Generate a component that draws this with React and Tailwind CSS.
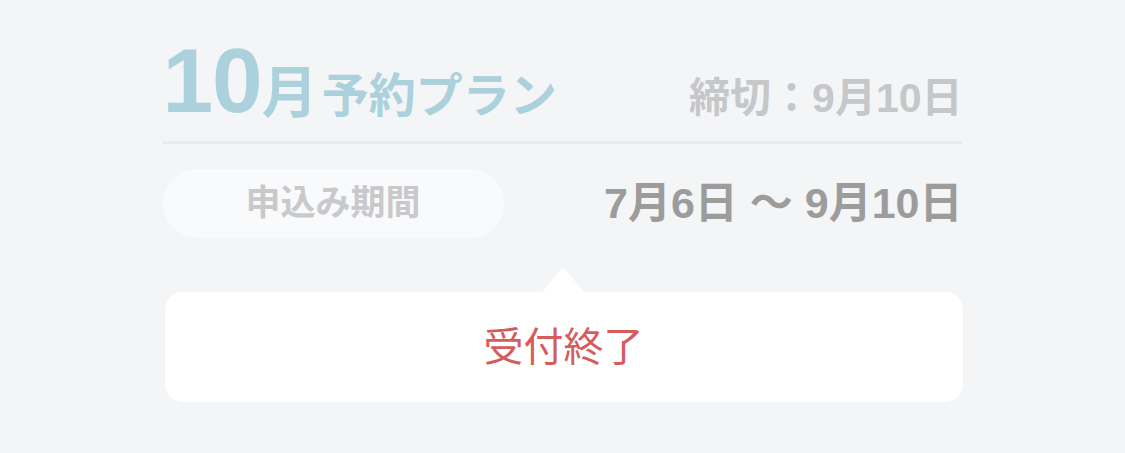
const font = 'font-["Liberation_Sans","Noto_Sans_CJK_JP",sans-serif]'

export default function App() {
  return (
    <div className={`min-h-screen bg-[#f4f5f7] ${font}`}>
      <div className="mx-auto w-[800px] pt-[35px]">
        {/* 見出し */}
        <div className="flex items-baseline justify-between border-b-[3px] border-[#e9ebee] pb-[15px]">
          <h1 className="flex items-baseline font-bold leading-none text-[#aad1dc]">
            <span className="text-[91px] tracking-[-1px]">10</span>
            <span className="text-[56px]">月</span>
            <span className="ml-[4px] text-[47px]">予約プラン</span>
          </h1>
          <p className="text-[41px] font-bold leading-none text-[#c6c7c9]">締切：9月10日</p>
        </div>

        {/* 申込み期間 */}
        <div className="mt-[25px] flex items-center justify-between">
          <span className="flex h-[69px] w-[341px] items-center justify-center rounded-full bg-[#f9fafb] text-[35px] font-bold text-[#c9c9cb]">
            申込み期間
          </span>
          <span className="text-[43px] font-bold leading-none text-[#9c9c9c]">7月6日 〜 9月10日</span>
        </div>

        {/* ステータス */}
        <div className="mt-[30px] flex justify-center">
          <svg width="42" height="24" viewBox="0 0 42 24" className="block">
            <path d="M0 24 L18.5 2 Q21 -0.5 23.5 2 L42 24 Z" fill="#ffffff" />
          </svg>
        </div>
        <div className="ml-[2px] flex h-[110px] items-center justify-center rounded-[18px] bg-white">
          <span className="text-[40px] leading-none text-[#d65c5c]">受付終了</span>
        </div>
      </div>
    </div>
  )
}
